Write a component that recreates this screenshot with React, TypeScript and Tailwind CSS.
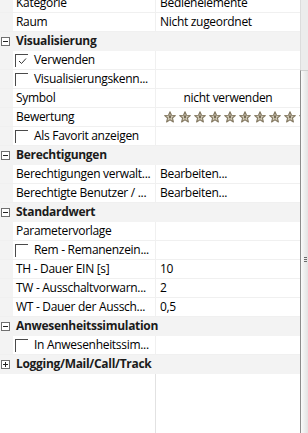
import React from 'react';

type Item =
  | { kind: 'section'; title: string; open: boolean }
  | {
      kind: 'prop';
      name: string;
      value?: string;
      check?: boolean;
      checked?: boolean;
      center?: boolean;
      stars?: boolean;
    };

const items: Item[] = [
  { kind: 'prop', name: 'Kategorie', value: 'Bedienelemente' },
  { kind: 'prop', name: 'Raum', value: 'Nicht zugeordnet' },
  { kind: 'section', title: 'Visualisierung', open: true },
  { kind: 'prop', name: 'Verwenden', check: true, checked: true },
  { kind: 'prop', name: 'Visualisierungskenn...', check: true },
  { kind: 'prop', name: 'Symbol', value: 'nicht verwenden', center: true },
  { kind: 'prop', name: 'Bewertung', stars: true },
  { kind: 'prop', name: 'Als Favorit anzeigen', check: true },
  { kind: 'section', title: 'Berechtigungen', open: true },
  { kind: 'prop', name: 'Berechtigungen verwalt...', value: 'Bearbeiten...' },
  { kind: 'prop', name: 'Berechtigte Benutzer / ...', value: 'Bearbeiten...' },
  { kind: 'section', title: 'Standardwert', open: true },
  { kind: 'prop', name: 'Parametervorlage' },
  { kind: 'prop', name: 'Rem - Remanenzein...', check: true },
  { kind: 'prop', name: 'TH - Dauer EIN [s]', value: '10' },
  { kind: 'prop', name: 'TW - Ausschaltvorwarn...', value: '2' },
  { kind: 'prop', name: 'WT - Dauer der Aussch...', value: '0,5' },
  { kind: 'section', title: 'Anwesenheitssimulation', open: true },
  { kind: 'prop', name: 'In Anwesenheitssim...', check: true },
  { kind: 'section', title: 'Logging/Mail/Call/Track', open: false },
];

function Expander({ open }: { open: boolean }) {
  return (
    <svg width="9" height="9" viewBox="0 0 9 9" className="ml-[1px] shrink-0">
      <rect x="0.5" y="0.5" width="8" height="8" fill="white" stroke="#6f6f6f" />
      <line x1="2" y1="4.5" x2="7" y2="4.5" stroke="#222" />
      {!open && <line x1="4.5" y1="2" x2="4.5" y2="7" stroke="#222" />}
    </svg>
  );
}

function Checkbox({ checked }: { checked?: boolean }) {
  return (
    <div className="w-[13px] h-[13px] shrink-0 border-t border-l border-[#4a4a4a] bg-white">
      {checked && (
        <svg width="12" height="12" viewBox="0 0 12 12">
          <polyline points="3,6 5.5,8.5 10,3.5" fill="none" stroke="#333" strokeWidth="1" />
        </svg>
      )}
    </div>
  );
}

function Star() {
  return (
    <svg width="12" height="12" viewBox="0 0 12 12" className="shrink-0">
      <path
        d="M6 0.7 L7.5 4.3 L11.3 4.5 L8.4 7 L9.4 11 L6 8.8 L2.6 11 L3.6 7 L0.7 4.5 L4.5 4.3 Z"
        fill="#d3ccb9"
        stroke="#857a63"
        strokeWidth="1.1"
        strokeLinejoin="round"
      />
      <path d="M6 3.6 L7.2 5.6 L6.8 7.6 L6 7.1 L5.2 7.6 L4.8 5.6 Z" fill="#776c57" />
    </svg>
  );
}

function Row({ item }: { item: Item }) {
  if (item.kind === 'section') {
    return (
      <div className="h-[19px] flex items-center bg-[#f3f3f3] pb-[1px]">
        <Expander open={item.open} />
        <span className="ml-[6px] font-bold text-[#1b1b1b] whitespace-nowrap leading-[18px]">
          {item.title}
        </span>
      </div>
    );
  }

  return (
    <div className="h-[19px] flex bg-[#f0f0f0] pb-[1px]">
      <div className="w-[13px] shrink-0 bg-[#f3f3f3]" />
      <div className="w-[142px] shrink-0 bg-white flex items-center overflow-hidden whitespace-nowrap">
        {item.check ? (
          <>
            <div className="ml-[2px]">
              <Checkbox checked={item.checked} />
            </div>
            <span className="ml-[6px]">{item.name}</span>
          </>
        ) : (
          <span className="ml-[3px]">{item.name}</span>
        )}
      </div>
      <div className="w-px shrink-0" />
      <div
        className={`flex-1 bg-white flex items-center overflow-hidden whitespace-nowrap ${
          item.center ? 'justify-center' : ''
        }`}
      >
        {item.stars ? (
          <div className="flex gap-[3px] pl-[8px]">
            {Array.from({ length: 10 }).map((_, i) => (
              <Star key={i} />
            ))}
          </div>
        ) : item.center ? (
          <span>{item.value}</span>
        ) : (
          <span className="pl-[4px]">{item.value}</span>
        )}
      </div>
    </div>
  );
}

export default function App() {
  return (
    <div className="w-[308px] h-[433px] overflow-hidden flex bg-white text-[12px] tracking-[-0.3px] text-black font-['Open_Sans','Noto_Sans',sans-serif]">
      {/* property grid */}
      <div className="w-[300px] flex flex-col">
        <div className="-mt-[6px]">
          {items.map((item, i) => (
            <Row key={i} item={item} />
          ))}
        </div>
        <div className="flex-1 flex bg-white">
          <div className="w-[155px]" />
          <div className="w-px bg-[#e2e2e2]" />
        </div>
      </div>

      {/* splitter */}
      <div className="w-[8px] flex flex-col">
        <div className="h-[70px] bg-[#ececec] border-l border-[#dcdcdc]" />
        <div className="flex-1 border-t border-l border-t-[#cfcfcf] border-l-[#8c8c8c] bg-gradient-to-r from-[#fafafa] to-[#e2e2e2]">
          <div className="mt-[186px] ml-[3px] w-[3px] flex flex-col gap-[1px]">
            <div className="h-px bg-[#6a6a6a]" />
            <div className="h-px bg-[#6a6a6a]" />
            <div className="h-px bg-[#6a6a6a]" />
          </div>
        </div>
      </div>
    </div>
  );
}
